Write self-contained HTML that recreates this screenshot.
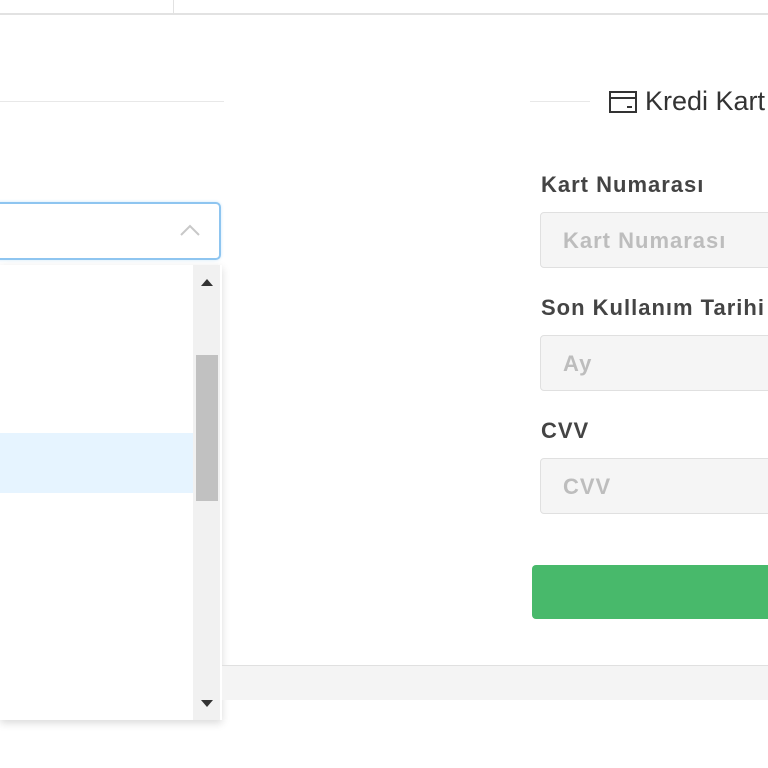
<!DOCTYPE html>
<html><head><meta charset="utf-8"><style>
*{margin:0;padding:0;box-sizing:border-box}
body{width:768px;height:768px;overflow:hidden;background:#fff;position:relative;font-family:"Liberation Sans","DejaVu Sans",sans-serif}
.a{position:absolute}
.lbl{position:absolute;left:541px;font-size:22px;font-weight:bold;color:#444;white-space:nowrap;letter-spacing:1px}
.inp{position:absolute;left:540px;width:240px;height:56px;background:#f5f5f5;border:1px solid #e0e0e0;border-radius:4px;color:#bdbdbd;font-size:22px;padding-left:22px;line-height:56px;font-weight:bold;letter-spacing:1px;white-space:nowrap}
</style></head><body>
<div class="a" style="left:0;top:13px;width:768px;height:2px;background:#e2e2e2"></div>
<div class="a" style="left:173px;top:0;width:1px;height:14px;background:#e2e2e2"></div>
<div class="a" style="left:0;top:101px;width:224px;height:1px;background:#e8e8e8"></div>
<div class="a" style="left:530px;top:101px;width:60px;height:1px;background:#e8e8e8"></div>
<svg class="a" style="left:608px;top:89px" width="30" height="26" viewBox="0 0 30 26"><rect x="2" y="3" width="26" height="20" fill="none" stroke="#333" stroke-width="2"/><line x1="2" y1="9" x2="28" y2="9" stroke="#333" stroke-width="2"/><line x1="19" y1="18" x2="24" y2="18" stroke="#333" stroke-width="2"/></svg>
<div class="a" style="left:645px;top:86px;font-size:27px;color:#333;white-space:nowrap">Kredi Kart</div>
<div class="a" style="left:-6px;top:202px;width:227px;height:58px;border:2px solid #8ec5f0;border-radius:5px;box-shadow:0 0 3px #cfe8fb"></div>
<svg class="a" style="left:178px;top:222px" width="24" height="16"><polyline points="3,13 12,4 21,13" fill="none" stroke="#c8c8c8" stroke-width="2"/></svg>
<div class="a" style="left:0;top:265px;width:222px;height:455px;background:#fff;box-shadow:0 3px 8px rgba(0,0,0,.15)"></div>
<div class="a" style="left:0;top:433px;width:193px;height:60px;background:#e6f4ff"></div>
<div class="a" style="left:193px;top:265px;width:27px;height:455px;background:#f1f1f1"></div>
<div class="a" style="left:196px;top:355px;width:22px;height:146px;background:#c1c1c1"></div>
<div class="a" style="left:201px;top:279px;width:0;height:0;border-left:6px solid transparent;border-right:6px solid transparent;border-bottom:7px solid #333"></div>
<div class="a" style="left:201px;top:700px;width:0;height:0;border-left:6px solid transparent;border-right:6px solid transparent;border-top:7px solid #333"></div>
<div class="lbl" style="top:172px">Kart Numarası</div>
<div class="inp" style="top:212px">Kart Numarası</div>
<div class="lbl" style="top:295px">Son Kullanım Tarihi</div>
<div class="inp" style="top:335px">Ay</div>
<div class="lbl" style="top:418px">CVV</div>
<div class="inp" style="top:458px">CVV</div>
<div class="a" style="left:532px;top:565px;width:250px;height:54px;background:#48b96b;border-radius:4px"></div>
<div class="a" style="left:222px;top:665px;width:546px;height:1px;background:#e0e0e0"></div>
<div class="a" style="left:222px;top:666px;width:546px;height:34px;background:#f4f4f4"></div>
</body></html>
